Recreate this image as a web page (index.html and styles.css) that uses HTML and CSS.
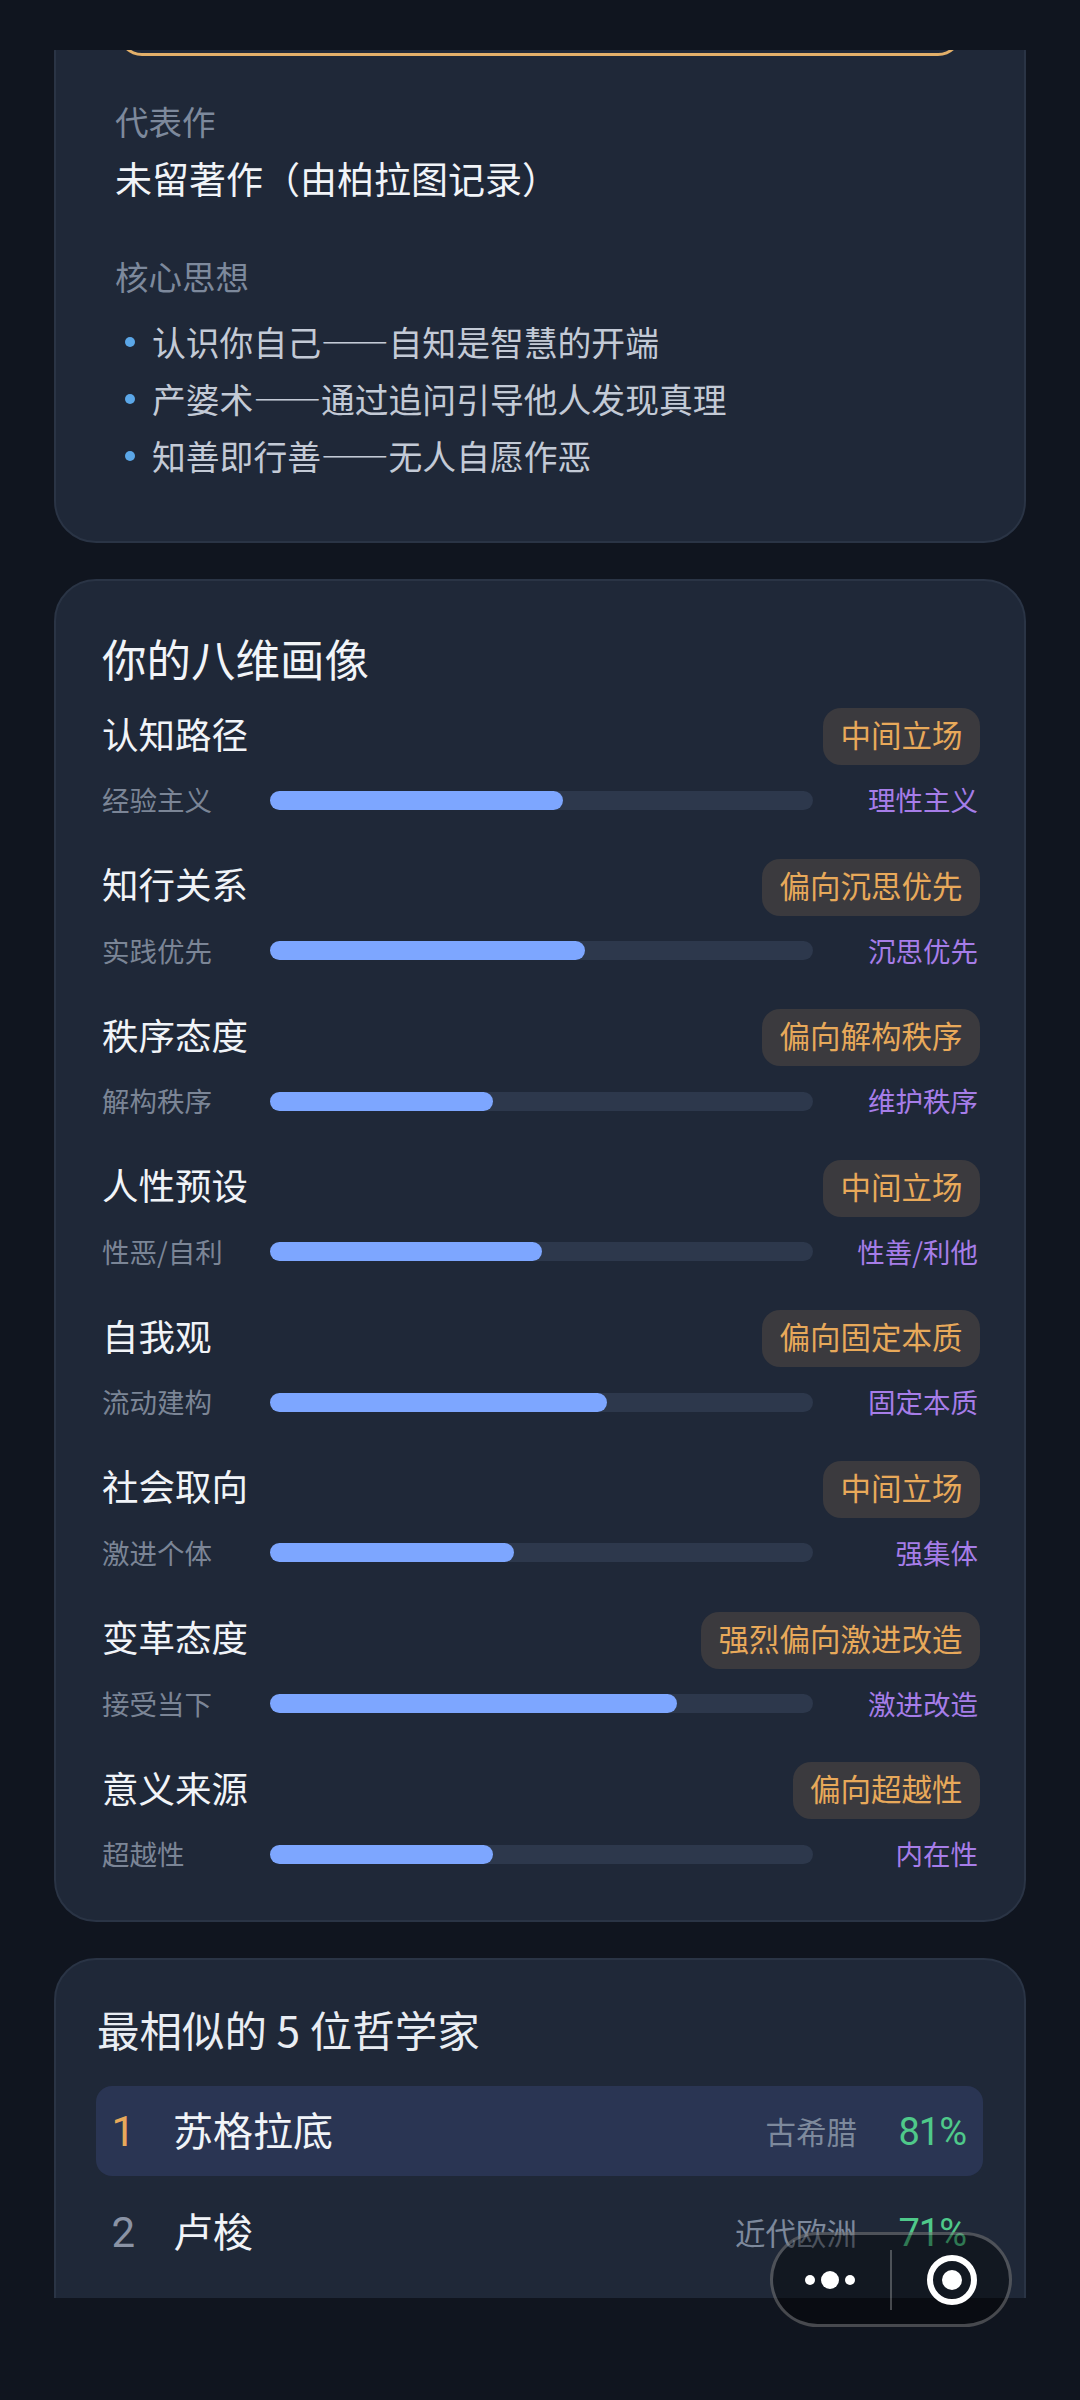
FILE: index.html
```html
<!DOCTYPE html>
<html lang="zh-CN">
<head>
    <meta charset="UTF-8">
    <meta name="viewport" content="width=device-width, initial-scale=1.0">
    <title>哲学家测试结果</title>
    <link rel="stylesheet" href="styles.css">
</head>
<body>

    <div class="scroller">
        <section class="card card-intro">
            <div class="quote"></div>

            <div class="intro-label first">代表作</div>
            <div class="intro-value">未留著作（由柏拉图记录）</div>

            <div class="intro-label second">核心思想</div>
            <ul class="ideas">
                <li>认识你自己——自知是智慧的开端</li>
                <li>产婆术——通过追问引导他人发现真理</li>
                <li>知善即行善——无人自愿作恶</li>
            </ul>
        </section>

        <section class="card card-dims">
            <h2 class="dims-title">你的八维画像</h2>

            <div class="dim">
                <div class="dim-head"><span class="dim-name">认知路径</span><span class="badge">中间立场</span></div>
                <div class="dim-scale">
                    <span class="pole-left">经验主义</span>
                    <div class="track"><div class="fill" style="width: 54%"></div></div>
                    <span class="pole-right">理性主义</span>
                </div>
            </div>

            <div class="dim">
                <div class="dim-head"><span class="dim-name">知行关系</span><span class="badge">偏向沉思优先</span></div>
                <div class="dim-scale">
                    <span class="pole-left">实践优先</span>
                    <div class="track"><div class="fill" style="width: 58%"></div></div>
                    <span class="pole-right">沉思优先</span>
                </div>
            </div>

            <div class="dim">
                <div class="dim-head"><span class="dim-name">秩序态度</span><span class="badge">偏向解构秩序</span></div>
                <div class="dim-scale">
                    <span class="pole-left">解构秩序</span>
                    <div class="track"><div class="fill" style="width: 41%"></div></div>
                    <span class="pole-right">维护秩序</span>
                </div>
            </div>

            <div class="dim">
                <div class="dim-head"><span class="dim-name">人性预设</span><span class="badge">中间立场</span></div>
                <div class="dim-scale">
                    <span class="pole-left">性恶/自利</span>
                    <div class="track"><div class="fill" style="width: 50%"></div></div>
                    <span class="pole-right">性善/利他</span>
                </div>
            </div>

            <div class="dim">
                <div class="dim-head"><span class="dim-name">自我观</span><span class="badge">偏向固定本质</span></div>
                <div class="dim-scale">
                    <span class="pole-left">流动建构</span>
                    <div class="track"><div class="fill" style="width: 62%"></div></div>
                    <span class="pole-right">固定本质</span>
                </div>
            </div>

            <div class="dim">
                <div class="dim-head"><span class="dim-name">社会取向</span><span class="badge">中间立场</span></div>
                <div class="dim-scale">
                    <span class="pole-left">激进个体</span>
                    <div class="track"><div class="fill" style="width: 45%"></div></div>
                    <span class="pole-right">强集体</span>
                </div>
            </div>

            <div class="dim">
                <div class="dim-head"><span class="dim-name">变革态度</span><span class="badge">强烈偏向激进改造</span></div>
                <div class="dim-scale">
                    <span class="pole-left">接受当下</span>
                    <div class="track"><div class="fill" style="width: 75%"></div></div>
                    <span class="pole-right">激进改造</span>
                </div>
            </div>

            <div class="dim">
                <div class="dim-head"><span class="dim-name">意义来源</span><span class="badge">偏向超越性</span></div>
                <div class="dim-scale">
                    <span class="pole-left">超越性</span>
                    <div class="track"><div class="fill" style="width: 41%"></div></div>
                    <span class="pole-right">内在性</span>
                </div>
            </div>
        </section>

        <section class="card card-match">
            <h2 class="match-title">最相似的 5 位哲学家</h2>

            <div class="match top">
                <span class="rank">1</span>
                <span class="match-name">苏格拉底</span>
                <span class="era">古希腊</span>
                <span class="percent">81%</span>
            </div>
            <div class="match">
                <span class="rank">2</span>
                <span class="match-name">卢梭</span>
                <span class="era">近代欧洲</span>
                <span class="percent">71%</span>
            </div>
        </section>
    </div>

    <div class="capsule">
        <div class="capsule-btn dots">
            <svg width="80" height="24" viewBox="0 0 80 24"><circle cx="20" cy="12" r="5" fill="#fff"/><circle cx="40" cy="12" r="9" fill="#fff"/><circle cx="60" cy="12" r="5" fill="#fff"/></svg>
        </div>
        <div class="capsule-line"></div>
        <div class="capsule-btn target">
            <svg width="52" height="52" viewBox="0 0 52 52"><circle cx="26" cy="26" r="22" fill="none" stroke="#fff" stroke-width="6"/><circle cx="26" cy="26" r="10" fill="#fff"/></svg>
        </div>
    </div>

</body>
</html>
```

FILE: styles.css
```css
* {
    box-sizing: border-box;
}
body {
    margin: 0;
    height: 2400px;
    overflow: hidden;
    background-color: #10151f;
    font-family: "Noto Sans CJK SC", "Noto Sans", sans-serif;
    position: relative;
}
.scroller {
    margin: 50px 54px 0;
    height: 2248px;
    overflow: hidden;
}
.card {
    background-color: #1f2838;
    border: 2px solid #2a3445;
    border-radius: 42px;
}
.card-intro {
    margin-top: -40px;
    height: 533px;
    padding: 0 59px;
}
.quote {
    height: 44px;
    margin: 0 3px;
    border: 3px solid #e3b06a;
    border-top: none;
    border-radius: 0 0 24px 24px;
}
.intro-label {
    font-size: 33.5px;
    line-height: 46px;
    color: #7d899c;
}
.intro-label.first {
    margin-top: 42px;
}
.intro-label.second {
    margin-top: 50px;
}
.intro-value {
    margin-top: 9px;
    font-size: 37px;
    line-height: 50px;
    color: #f1f4f8;
}
.ideas {
    list-style: none;
    margin: 14px 0 0;
    padding: 0 0 0 37px;
}
.ideas li {
    position: relative;
    font-size: 33.8px;
    line-height: 57px;
    color: #c3cad6;
}
.ideas li::before {
    content: "";
    position: absolute;
    left: -27px;
    top: 24px;
    width: 10px;
    height: 10px;
    border-radius: 50%;
    background-color: #5ba7e8;
}

.card-dims {
    margin-top: 36px;
    padding: 47px 44px 7px 46px;
}
.dims-title {
    margin: 0 0 20px;
    font-size: 44.5px;
    font-weight: 400;
    line-height: 60px;
    color: #f1f4f8;
}
.dim {
    margin-bottom: 38.6px;
}
.dim-head {
    display: flex;
    justify-content: space-between;
    align-items: center;
    height: 57px;
}
.dim-name {
    padding-bottom: 6px;
    font-size: 36.5px;
    line-height: 50px;
    color: #f1f4f8;
}
.badge {
    height: 57px;
    padding: 0 17.5px;
    border-radius: 18px;
    background-color: #3b3a3e;
    color: #e8a95a;
    font-size: 30.5px;
    line-height: 53px;
}
.dim-scale {
    display: flex;
    align-items: center;
    height: 40px;
    margin-top: 15px;
    font-size: 27.5px;
    line-height: 38px;
}
.pole-left {
    width: 168px;
    padding-bottom: 2px;
    color: #7b8596;
}
.pole-right {
    width: 167px;
    padding: 0 2px 2px 0;
    text-align: right;
    color: #a67de8;
}
.track {
    flex: 1;
    height: 19px;
    border-radius: 10px;
    background-color: #2d384c;
}
.fill {
    height: 100%;
    border-radius: 10px;
    background-color: #7da6ff;
}

.card-match {
    margin-top: 36px;
    height: 600px;
    padding: 39px 41px 0 40px;
}
.match-title {
    margin: 0 0 27px 1px;
    font-size: 42.5px;
    font-weight: 400;
    line-height: 60px;
    color: #e9edf3;
}
.match {
    display: flex;
    align-items: center;
    height: 90px;
    margin-top: 11px;
    padding: 0 17px;
    border-radius: 16px;
}
.match.top {
    background-color: #2a3553;
}
.rank {
    width: 61.5px;
    margin-left: -1.5px;
    padding-top: 2px;
    font-family: Roboto, "Noto Sans", sans-serif;
    font-size: 42px;
    color: #8a93a5;
}
.top .rank {
    color: #e8a95a;
}
.match-name {
    flex: 1;
    padding-bottom: 3px;
    font-size: 40px;
    color: #f1f4f8;
}
.era {
    font-size: 30.5px;
    color: #7d899c;
}
.percent {
    width: 109px;
    padding-top: 3px;
    text-align: right;
    font-family: Roboto, "Noto Sans", sans-serif;
    font-size: 38px;
    letter-spacing: -1px;
    color: #4fc98a;
}

/* mini program capsule floats over the page */
.capsule {
    position: absolute;
    left: 770px;
    top: 2232px;
    width: 242px;
    height: 95px;
    display: flex;
    align-items: center;
    border: 3px solid rgba(255, 255, 255, 0.25);
    border-radius: 48px;
    background-color: rgba(0, 0, 0, 0.4);
}
.capsule-btn {
    flex: 1;
    display: flex;
    justify-content: center;
    align-items: center;
}
.capsule-btn.dots {
    padding-right: 3px;
}
.capsule-btn.target {
    padding-left: 3px;
}
.capsule-line {
    width: 2px;
    height: 60px;
    background-color: rgba(255, 255, 255, 0.25);
}
```
